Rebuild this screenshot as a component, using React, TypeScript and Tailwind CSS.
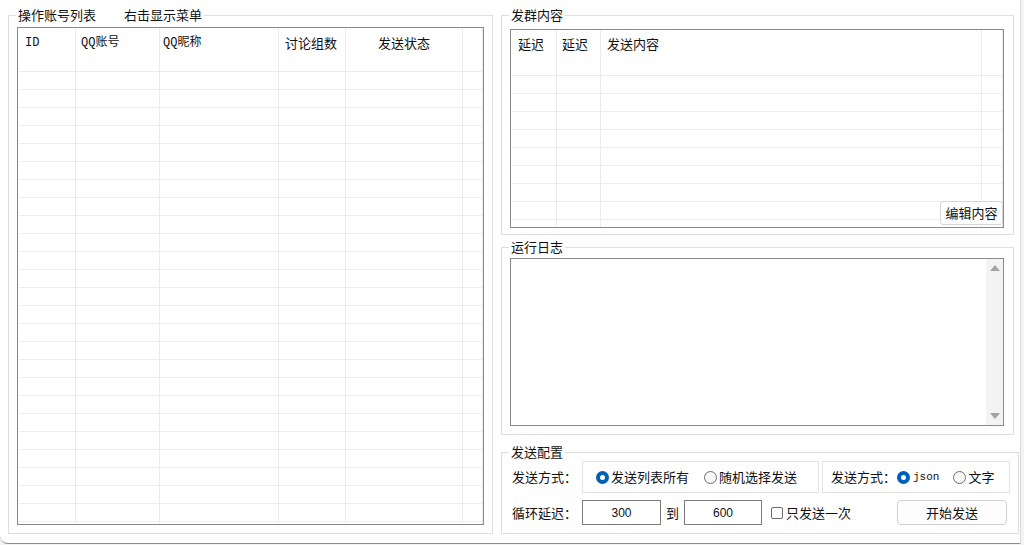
import React from "react";

const cjk = "font-['Noto_Sans_CJK_SC','Microsoft_YaHei',sans-serif]";
const mono = "font-['Liberation_Mono','Noto_Sans_CJK_SC',monospace]";

const accountColumns = [
  { label: "ID", width: "w-[58px]", pad: "pl-[7px]", mono: true },
  { label: "QQ账号", width: "w-[84px]", pad: "pl-[5px]", mono: true },
  { label: "QQ昵称", width: "w-[119px]", pad: "pl-[3px]", mono: true },
  { label: "讨论组数", width: "w-[67px]", pad: "pl-[6px]", mono: false },
  { label: "发送状态", width: "w-[117px]", pad: "justify-center", mono: false },
  { label: "", width: "flex-1", pad: "", mono: false },
];

const contentColumns = [
  { label: "延迟", width: "w-[46px]", pad: "pl-[7px]" },
  { label: "延迟", width: "w-[44px]", pad: "pl-[5px]" },
  { label: "发送内容", width: "w-[381px]", pad: "pl-[6px]" },
  { label: "", width: "flex-1", pad: "" },
];

function Group({
  title,
  className,
  children,
}: {
  title: React.ReactNode;
  className: string;
  children: React.ReactNode;
}) {
  return (
    <fieldset className={`border border-[#dedede] px-[8px] ${className}`}>
      <legend className="ml-[-1px] px-[2px] text-[13px] leading-[16px] text-[#111]">
        {title}
      </legend>
      {children}
    </fieldset>
  );
}

function Radio({ checked }: { checked?: boolean }) {
  if (checked) {
    return (
      <span className="flex size-[13px] shrink-0 items-center justify-center rounded-full bg-[#005fb8]">
        <span className="size-[5px] rounded-full bg-white" />
      </span>
    );
  }
  return <span className="size-[13px] shrink-0 rounded-full border border-[#6e6e6e] bg-[#f7f7f7]" />;
}

function AccountList() {
  const rows = Array.from({ length: 26 });
  return (
    <div className="mt-[4px] h-[498px] w-[467px] overflow-hidden border border-[#8a8a8a] bg-white">
      <div className="flex h-[44px] border-b border-[#ececec]">
        {accountColumns.map((c, i) => (
          <div
            key={i}
            className={`flex h-full border-r border-[#ececec] pt-[7px] ${c.width} ${c.pad} ${
              c.mono ? mono + " text-[12px]" : "text-[13px]"
            } leading-[16px] text-[#111]`}
          >
            {c.label}
          </div>
        ))}
      </div>
      {rows.map((_, r) => (
        <div key={r} className="flex h-[18px] border-b border-[#ededed]">
          {accountColumns.map((c, i) => (
            <div key={i} className={`h-full border-r border-[#ececec] ${c.width}`} />
          ))}
        </div>
      ))}
    </div>
  );
}

function ContentList() {
  const rows = Array.from({ length: 9 });
  return (
    <div className="relative mt-[6px] h-[199px] w-[494px] overflow-hidden border border-[#8a8a8a] bg-white">
      <div className="flex h-[46px] border-b border-[#ececec]">
        {contentColumns.map((c, i) => (
          <div
            key={i}
            className={`flex h-full border-r border-[#ececec] pt-[6px] text-[13px] leading-[16px] text-[#111] ${c.width} ${c.pad}`}
          >
            {c.label}
          </div>
        ))}
      </div>
      {rows.map((_, r) => (
        <div key={r} className="flex h-[18px] border-b border-[#ededed]">
          {contentColumns.map((c, i) => (
            <div key={i} className={`h-full border-r border-[#ececec] ${c.width}`} />
          ))}
        </div>
      ))}
      {/* button sits over the list's bottom-right corner */}
      <button className="absolute right-[0px] bottom-[2px] flex h-[24px] w-[63px] items-center justify-center rounded-[3px] border border-[#d6d6d6] bg-white text-[13px] leading-[16px] text-[#111]">
        编辑内容
      </button>
    </div>
  );
}

function LogBox() {
  return (
    <div className="mt-[3px] flex h-[168px] w-[494px] border border-[#8a8a8a] bg-white">
      <div className="flex-1" />
      <div className="flex w-[17px] flex-col items-center justify-between bg-[#f3f3f3] py-[6px]">
        <span className="h-0 w-0 border-x-[5px] border-b-[6px] border-x-transparent border-b-[#a3a3a3]" />
        <span className="h-0 w-0 border-x-[5px] border-t-[6px] border-x-transparent border-t-[#a3a3a3]" />
      </div>
    </div>
  );
}

function SendConfig() {
  return (
    <div className="flex flex-col text-[13px] leading-[16px] text-[#111]">
      <div className="mt-[1px] flex h-[32px] items-center">
        <span className="ml-[2px] w-[70px]">发送方式：</span>
        <div className="flex h-full w-[237px] items-center border border-[#e2e2e2] pl-[13px]">
          <Radio checked />
          <span className="ml-[2px]">发送列表所有</span>
          <span className="ml-[15px]" />
          <Radio />
          <span className="ml-[2px]">随机选择发送</span>
        </div>
        <div className="ml-[3px] flex h-full w-[188px] items-center border border-[#e2e2e2] pl-[8px]">
          <span>发送方式：</span>
          <span className="ml-[1px]" />
          <Radio checked />
          <span className={`ml-[3px] ${mono} text-[11px]`}>json</span>
          <span className="ml-[14px]" />
          <Radio />
          <span className="ml-[2px]">文字</span>
        </div>
      </div>
      <div className="mt-[7px] flex h-[25px] items-center">
        <span className="ml-[2px] w-[70px]">循环延迟：</span>
        <div className="flex h-full w-[79px] items-center justify-center border border-[#7a7a7a] bg-white font-['Liberation_Sans',sans-serif] text-[12px]">
          300
        </div>
        <span className="ml-[5px] w-[18px]">到</span>
        <div className="flex h-full w-[78px] items-center justify-center border border-[#7a7a7a] bg-white font-['Liberation_Sans',sans-serif] text-[12px]">
          600
        </div>
        <span className="ml-[9px] size-[12px] rounded-[2px] border border-[#6e6e6e] bg-white" />
        <span className="ml-[3px]">只发送一次</span>
        <button className="ml-auto mr-[3px] flex h-full w-[110px] items-center justify-center rounded-[4px] border border-[#d0d0d0] bg-[#fdfdfd]">
          开始发送
        </button>
      </div>
    </div>
  );
}

export default function App() {
  return (
    <div className={`h-[545px] w-[1024px] overflow-hidden bg-[#f4f4f4] ${cjk}`}>
      <div className="flex h-[544px] w-[1021px] gap-[8px] rounded-bl-[8px] border-r border-b border-r-[#d9d9d9] border-b-[#8c8c8c] bg-white px-[8px] pt-[7px]">
        <Group
          className="h-[527px] w-[486px]"
          title={
            <span className="flex gap-[28px]">
              <span>操作账号列表</span>
              <span>右击显示菜单</span>
            </span>
          }
        >
          <AccountList />
        </Group>
        <div className="flex w-[513px] flex-col">
          <Group title="发群内容" className="h-[228px]">
            <ContentList />
          </Group>
          <Group title="运行日志" className="mt-[4px] h-[196px]">
            <LogBox />
          </Group>
          <Group title="发送配置" className="mt-[9px] h-[90px]">
            <SendConfig />
          </Group>
        </div>
      </div>
    </div>
  );
}
